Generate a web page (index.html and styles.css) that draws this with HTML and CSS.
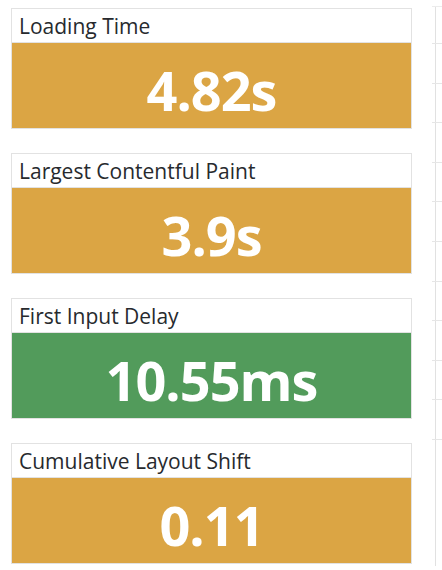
FILE: index.html
```html
<!DOCTYPE html>
<html>
<head>
<meta charset="utf-8">
<link rel="stylesheet" href="styles.css">
</head>
<body>
<div class="page">
  <div class="cards">
    <div class="card">
      <div class="card-title">Loading Time</div>
      <div class="card-value warn">4.82s</div>
    </div>
    <div class="card">
      <div class="card-title">Largest Contentful Paint</div>
      <div class="card-value warn">3.9s</div>
    </div>
    <div class="card">
      <div class="card-title">First Input Delay</div>
      <div class="card-value good">10.55ms</div>
    </div>
    <div class="card">
      <div class="card-title">Cumulative Layout Shift</div>
      <div class="card-value warn">0.11</div>
    </div>
  </div>
  <div class="side">
    <div class="side-row first"></div>
    <div class="side-row"></div>
    <div class="side-row"></div>
    <div class="side-row"></div>
    <div class="side-row"></div>
    <div class="side-row"></div>
    <div class="side-row"></div>
    <div class="side-row"></div>
    <div class="side-row"></div>
    <div class="side-row"></div>
    <div class="side-row"></div>
  </div>
</div>
</body>
</html>
```
FILE: styles.css
```css
html, body {
  margin: 0;
  padding: 0;
  background: #ffffff;
}
body {
  font-family: "Open Sans", "Noto Sans", sans-serif;
  width: 442px;
  height: 570px;
  overflow: hidden;
}
.page {
  display: flex;
  align-items: flex-start;
}
.cards {
  display: flex;
  flex-direction: column;
  gap: 24px;
  margin: 8px 0 0 11px;
  width: 401px;
}
.card {
  border: 1px solid #e2e2e2;
  display: flex;
  flex-direction: column;
}
.card-title {
  height: 34px;
  box-sizing: border-box;
  padding: 4px 0 0 7px;
  font-size: 21px;
  line-height: 27px;
  color: #272a2e;
  background: #fff;
  border-bottom: 1px solid #e2e2e2;
}
.card-value {
  height: 85px;
  display: flex;
  align-items: center;
  justify-content: center;
  color: #fff;
  font-weight: 700;
  font-size: 54px;
  line-height: 1;
  padding-top: 8px;
  box-sizing: border-box;
  letter-spacing: -1px;
}
.warn { background: #dba544; }
.good { background: #529b5b; }
.side {
  margin: 6px 0 0 20px;
  width: 10px;
  height: 559px;
  border-top: 1px solid #ececec;
  background-image: linear-gradient(#e1e1e1, #e1e1e1);
  background-size: 1px 100%;
  background-position: 3px 0;
  background-repeat: no-repeat;
  display: flex;
  flex-direction: column;
}
.side-row {
  height: 39.6px;
  flex: none;
  box-sizing: border-box;
  border-bottom: 1px solid #e6e6e6;
}
.side-row.first {
  height: 37px;
}
```
